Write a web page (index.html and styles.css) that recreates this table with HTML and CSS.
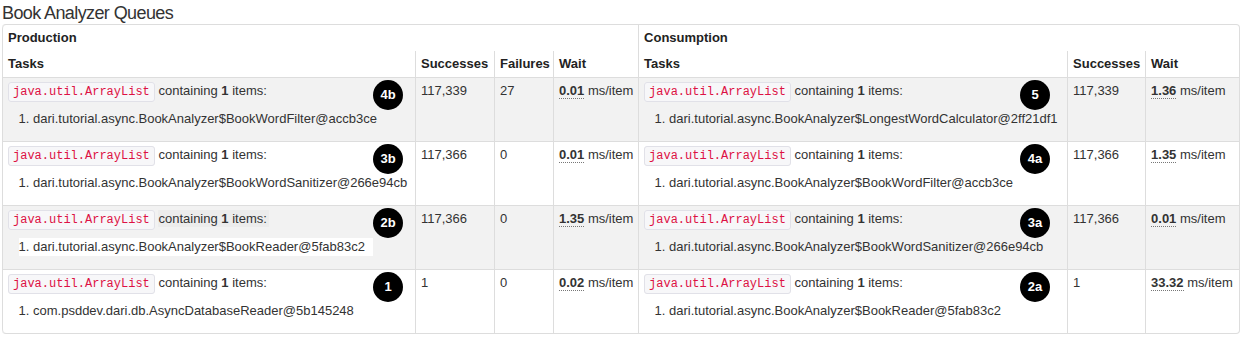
FILE: index.html
```html
<!DOCTYPE html>
<html lang="en">
<head>
  <meta charset="UTF-8" />
  <title>Book Analyzer Queues</title>
  <link rel="stylesheet" href="styles.css">
</head>
<body>

  <h2 class="page-title">Book Analyzer Queues</h2>

  <table class="queues">
    <colgroup>
      <col class="c-tasks">
      <col class="c-succ">
      <col class="c-fail">
      <col class="c-wait">
      <col class="c-tasks2">
      <col class="c-succ2">
      <col class="c-wait2">
    </colgroup>
    <thead>
      <tr>
        <th colspan="4">Production</th>
        <th colspan="3">Consumption</th>
      </tr>
      <tr>
        <th>Tasks</th>
        <th>Successes</th>
        <th>Failures</th>
        <th>Wait</th>
        <th>Tasks</th>
        <th>Successes</th>
        <th>Wait</th>
      </tr>
    </thead>
    <tbody>
      <tr class="odd">
        <td class="task">
          <p><code>java.util.ArrayList</code> containing <b>1</b> items:</p>
          <ol><li>dari.tutorial.async.BookAnalyzer$BookWordFilter@accb3ce</li></ol>
          <span class="step">4b</span>
        </td>
        <td>117,339</td>
        <td>27</td>
        <td class="wait"><abbr>0.01</abbr> ms/item</td>
        <td class="task task-c">
          <p><code>java.util.ArrayList</code> containing <b>1</b> items:</p>
          <ol><li>dari.tutorial.async.BookAnalyzer$LongestWordCalculator@2ff21df1</li></ol>
          <span class="step">5</span>
        </td>
        <td>117,339</td>
        <td class="wait"><abbr>1.36</abbr> ms/item</td>
      </tr>
      <tr>
        <td class="task">
          <p><code>java.util.ArrayList</code> containing <b>1</b> items:</p>
          <ol><li>dari.tutorial.async.BookAnalyzer$BookWordSanitizer@266e94cb</li></ol>
          <span class="step">3b</span>
        </td>
        <td>117,366</td>
        <td>0</td>
        <td class="wait"><abbr>0.01</abbr> ms/item</td>
        <td class="task task-c">
          <p><code>java.util.ArrayList</code> containing <b>1</b> items:</p>
          <ol><li>dari.tutorial.async.BookAnalyzer$BookWordFilter@accb3ce</li></ol>
          <span class="step">4a</span>
        </td>
        <td>117,366</td>
        <td class="wait"><abbr>1.35</abbr> ms/item</td>
      </tr>
      <tr class="odd">
        <td class="task">
          <p><code>java.util.ArrayList</code> <span class="patch">containing <b>1</b> items:</span></p>
          <ol class="patch-white"><li>dari.tutorial.async.BookAnalyzer$BookReader@5fab83c2</li></ol>
          <span class="step">2b</span>
        </td>
        <td>117,366</td>
        <td>0</td>
        <td class="wait"><abbr>1.35</abbr> ms/item</td>
        <td class="task task-c">
          <p><code>java.util.ArrayList</code> containing <b>1</b> items:</p>
          <ol><li>dari.tutorial.async.BookAnalyzer$BookWordSanitizer@266e94cb</li></ol>
          <span class="step">3a</span>
        </td>
        <td>117,366</td>
        <td class="wait"><abbr>0.01</abbr> ms/item</td>
      </tr>
      <tr>
        <td class="task">
          <p><code>java.util.ArrayList</code> containing <b>1</b> items:</p>
          <ol><li>com.psddev.dari.db.AsyncDatabaseReader@5b145248</li></ol>
          <span class="step">1</span>
        </td>
        <td>1</td>
        <td>0</td>
        <td class="wait"><abbr>0.02</abbr> ms/item</td>
        <td class="task task-c">
          <p><code>java.util.ArrayList</code> containing <b>1</b> items:</p>
          <ol><li>dari.tutorial.async.BookAnalyzer$BookReader@5fab83c2</li></ol>
          <span class="step">2a</span>
        </td>
        <td>1</td>
        <td class="wait"><abbr>33.32</abbr> ms/item</td>
      </tr>
    </tbody>
  </table>

</body>
</html>
```

FILE: styles.css
```css
* {
  box-sizing: border-box;
}

html, body {
  margin: 0;
  padding: 0;
  background: #fff;
}

body {
  font-family: 'Liberation Sans', Arial, sans-serif;
  font-size: 13px;
  line-height: 18px;
  color: #333;
  padding: 0 2px;
}

.page-title {
  margin: 0;
  padding-top: 2px;
  font-size: 18px;
  line-height: 22px;
  letter-spacing: -0.6px;
  font-weight: normal;
  color: #333;
}

/* tabella stile bootstrap, bordata e a righe alterne */
.queues {
  width: 1238px;
  border: 1px solid #ddd;
  border-left: 0;
  border-collapse: separate;
  border-spacing: 0;
  border-radius: 4px;
  table-layout: fixed;
}

.c-tasks  { width: 413px; }
.c-succ   { width: 79px; }
.c-fail   { width: 59px; }
.c-wait   { width: 85px; }
.c-tasks2 { width: 429px; }
.c-succ2  { width: 78px; }
.c-wait2  { width: 94px; }

.queues th,
.queues td {
  padding: 4px 5px;
  text-align: left;
  vertical-align: top;
  border-left: 1px solid #ddd;
  border-top: 1px solid #ddd;
}

.queues thead th {
  border-top: 0;
  font-weight: bold;
  color: #222;
}

.queues thead tr:first-child th:first-child {
  border-top-left-radius: 4px;
}

.queues tbody tr:last-child td:first-child {
  border-bottom-left-radius: 4px;
}

.queues tbody tr.odd td {
  background: #f2f2f2;
}

.wait {
  white-space: nowrap;
}

.task {
  position: relative;
}

.task p {
  margin: 0 0 9px;
}

.task ol {
  margin: 0 0 9px 25px;
  padding: 0;
}

code {
  font-family: 'Liberation Mono', monospace;
  font-size: 12px;
  padding: 2px 4px;
  color: #d14;
  background: #f7f7f9;
  border: 1px solid #e1e1e8;
  border-radius: 3px;
}

abbr {
  font-weight: bold;
  text-decoration: none;
  border-bottom: 1px dotted #777;
}

.patch {
  background: #ececec;
  padding: 1px 2px 1px 0;
}

.task ol.patch-white {
  width: fit-content;
  background: #fff;
  margin-left: 11px;
  padding: 0 8px 0 14px;
}

/* numerini neri sopra le celle */
.step {
  position: absolute;
  top: 2px;
  right: 12px;
  width: 30px;
  height: 30px;
  border-radius: 50%;
  background: #000;
  color: #fff;
  font-weight: bold;
  font-size: 13px;
  line-height: 30px;
  text-align: center;
}

.task-c .step {
  right: 17px;
}
```
